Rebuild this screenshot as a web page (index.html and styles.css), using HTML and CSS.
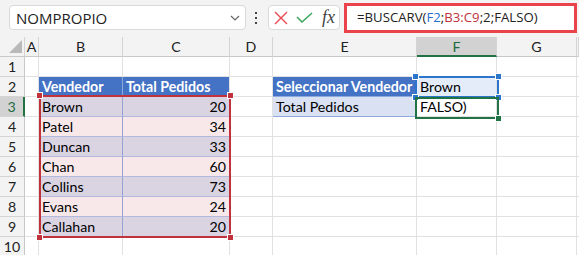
FILE: index.html
```html
<!DOCTYPE html>
<html>
<head>
    <title>BUSCARV - Seleccionar Vendedor</title>
    <link rel="stylesheet" href="styles.css">
</head>
<body>
    <div class="toolbar">
        <div class="name-box">
            <span>NOMPROPIO</span>
            <svg width="10" height="6" viewBox="0 0 10 6"><path d="M1 1 L5 5 L9 1" fill="none" stroke="#666" stroke-width="1.2"/></svg>
        </div>
        <svg class="dots" width="4" height="13" viewBox="0 0 4 13"><rect x="1" y="0" width="2" height="2"/><rect x="1" y="5" width="2" height="2"/><rect x="1" y="10" width="2" height="2"/></svg>
        <div class="fx-box">
            <svg width="14" height="14" viewBox="0 0 14 14"><path d="M1 1 L13 13 M13 1 L1 13" stroke="#e8474f" stroke-width="1.4"/></svg>
            <svg width="17" height="11" viewBox="0 0 17 11"><path d="M1 5 L6 10 L16 1" fill="none" stroke="#3aa65c" stroke-width="1.5"/></svg>
            <span class="fx">fx</span>
        </div>
        <div class="formula">=BUSCARV(<span class="ref-blue">F2</span>;<span class="ref-red">B3:C9</span>;2;FALSO)</div>
    </div>

    <div class="sheet">
        <!-- column headers -->
        <div class="cell corner"><svg width="14" height="14" viewBox="0 0 14 14"><path d="M13 0 L13 13 L0 13 Z" fill="#b9b9b9"/></svg></div>
        <div class="cell col-head">A</div>
        <div class="cell col-head">B</div>
        <div class="cell col-head">C</div>
        <div class="cell col-head">D</div>
        <div class="cell col-head">E</div>
        <div class="cell col-head active">F</div>
        <div class="cell col-head">G</div>
        <div class="cell col-head"></div>

        <!-- row 1 -->
        <div class="cell row-head">1</div>
        <div class="cell"></div><div class="cell"></div><div class="cell"></div><div class="cell"></div>
        <div class="cell"></div><div class="cell"></div><div class="cell"></div><div class="cell"></div>

        <!-- row 2 -->
        <div class="cell row-head">2</div>
        <div class="cell"></div>
        <div class="cell tbl-head sep">Vendedor</div>
        <div class="cell tbl-head">Total Pedidos</div>
        <div class="cell"></div>
        <div class="cell lookup-head">Seleccionar Vendedor</div>
        <div class="cell lookup-input">Brown</div>
        <div class="cell"></div><div class="cell"></div>

        <!-- row 3 -->
        <div class="cell row-head active">3</div>
        <div class="cell"></div>
        <div class="cell band-a sep">Brown</div>
        <div class="cell band-a num">20</div>
        <div class="cell"></div>
        <div class="cell lookup-label">Total Pedidos</div>
        <div class="cell lookup-result">FALSO)</div>
        <div class="cell"></div><div class="cell"></div>

        <!-- row 4 -->
        <div class="cell row-head">4</div>
        <div class="cell"></div>
        <div class="cell band-b sep">Patel</div>
        <div class="cell band-b num">34</div>
        <div class="cell"></div><div class="cell"></div><div class="cell"></div><div class="cell"></div><div class="cell"></div>

        <!-- row 5 -->
        <div class="cell row-head">5</div>
        <div class="cell"></div>
        <div class="cell band-a sep">Duncan</div>
        <div class="cell band-a num">33</div>
        <div class="cell"></div><div class="cell"></div><div class="cell"></div><div class="cell"></div><div class="cell"></div>

        <!-- row 6 -->
        <div class="cell row-head">6</div>
        <div class="cell"></div>
        <div class="cell band-b sep">Chan</div>
        <div class="cell band-b num">60</div>
        <div class="cell"></div><div class="cell"></div><div class="cell"></div><div class="cell"></div><div class="cell"></div>

        <!-- row 7 -->
        <div class="cell row-head">7</div>
        <div class="cell"></div>
        <div class="cell band-a sep">Collins</div>
        <div class="cell band-a num">73</div>
        <div class="cell"></div><div class="cell"></div><div class="cell"></div><div class="cell"></div><div class="cell"></div>

        <!-- row 8 -->
        <div class="cell row-head">8</div>
        <div class="cell"></div>
        <div class="cell band-b sep">Evans</div>
        <div class="cell band-b num">24</div>
        <div class="cell"></div><div class="cell"></div><div class="cell"></div><div class="cell"></div><div class="cell"></div>

        <!-- row 9 -->
        <div class="cell row-head">9</div>
        <div class="cell"></div>
        <div class="cell band-a sep">Callahan</div>
        <div class="cell band-a num">20</div>
        <div class="cell"></div><div class="cell"></div><div class="cell"></div><div class="cell"></div><div class="cell"></div>

        <!-- row 10 -->
        <div class="cell row-head">10</div>
        <div class="cell"></div><div class="cell"></div><div class="cell"></div><div class="cell"></div>
        <div class="cell"></div><div class="cell"></div><div class="cell"></div><div class="cell"></div>

        <!-- selections drawn over the cells -->
        <div class="sel sel-range">
            <i class="handle tl"></i><i class="handle tr"></i><i class="handle bl"></i><i class="handle br"></i>
        </div>
        <div class="sel sel-ref">
            <i class="handle tl"></i><i class="handle tr"></i><i class="handle bl"></i><i class="handle br"></i>
        </div>
        <div class="sel sel-active">
            <i class="handle br"></i>
        </div>
    </div>
</body>
</html>
```

FILE: styles.css
```css
body {
    margin: 0;
    width: 579px;
    height: 255px;
    overflow: hidden;
    background-color: #fff;
    font-family: "Lato", "Liberation Sans", sans-serif;
}

/* formula bar */
.toolbar {
    height: 37px;
    background-color: #f3f3f3;
    display: flex;
    align-items: flex-start;
    padding-left: 9px;
    font-family: "Open Sans", "Noto Sans", sans-serif;
    color: #222;
}

.name-box {
    margin-top: 5px;
    width: 237px;
    height: 25px;
    box-sizing: border-box;
    background-color: #fff;
    border: 1px solid #dadada;
    border-radius: 4px;
    display: flex;
    align-items: center;
    justify-content: space-between;
    padding: 0 5px 0 6px;
    font-size: 15px;
}

.dots {
    margin: 12px 0 0 8px;
    fill: #444;
}

.fx-box {
    margin: 5px 0 0 10px;
    width: 72px;
    height: 25px;
    box-sizing: border-box;
    background-color: #fff;
    border: 1px solid #dadada;
    border-radius: 4px;
    display: flex;
    align-items: center;
    gap: 8px;
    padding-left: 5px;
}

.fx {
    font-family: "Liberation Serif", serif;
    font-style: italic;
    font-size: 18px;
    color: #444;
    margin-left: 1px;
}

.formula {
    margin: 3px 0 0 4px;
    width: 233px;
    height: 30px;
    box-sizing: border-box;
    background-color: #fff;
    border: 3px solid #ea434c;
    padding-left: 10px;
    line-height: 23px;
    font-size: 13.2px;
}

.ref-blue {
    color: #2a6fcb;
}

.ref-red {
    color: #c0323c;
}

/* sheet grid */
.sheet {
    position: relative;
    display: grid;
    grid-template-columns: 25px 14px 84px 107px 43px 144px 80px 80px 2px;
    grid-template-rows: repeat(11, 20px);
    font-size: 14.2px;
    color: #000;
}

.cell {
    box-sizing: border-box;
    border-right: 1px solid #e1e1e1;
    border-bottom: 1px solid #e1e1e1;
    padding: 0 3px;
    line-height: 20px;
    white-space: nowrap;
    overflow: hidden;
}

.corner {
    background-color: #f3f3f3;
    border-right: 1px solid #d4d4d4;
    border-bottom: 1px solid #c8c8c8;
    padding: 3px 0 0 9px;
}

.corner svg {
    display: block;
}

.col-head {
    background-color: #f3f3f3;
    border-right: 1px solid #d4d4d4;
    border-bottom: 1px solid #c8c8c8;
    text-align: center;
    color: #222;
    padding: 0;
}

.col-head.active {
    background-color: #d2d2d2;
    border-bottom: 2px solid #217346;
    color: #1e6b41;
}

.row-head {
    background-color: #f3f3f3;
    border-right: 1px solid #c8c8c8;
    border-bottom: 1px solid #d4d4d4;
    text-align: center;
    color: #222;
    padding: 0;
}

.row-head.active {
    background-color: #d2d2d2;
    border-right: 2px solid #217346;
    color: #1e6b41;
}

/* data table */
.tbl-head {
    background-color: #4472c4;
    color: #fff;
    font-weight: bold;
    border-bottom-color: #4472c4;
}

.tbl-head.sep {
    border-right-color: #8ea9db;
}

.band-a {
    background-color: #d9d3e2;
    border-bottom-color: #b3b9dd;
}

.band-b {
    background-color: #f8e8ea;
    border-bottom-color: #b3b9dd;
}

.sep {
    border-right-color: #97a2d3;
}

.num {
    text-align: right;
}

/* lookup block */
.lookup-head {
    background-color: #4472c4;
    color: #fff;
    font-weight: bold;
    border-right-color: #8ea9db;
    border-bottom-color: #8ea9db;
}

.lookup-input {
    background-color: #e3ecf8;
}

.lookup-label {
    background-color: #d9e1f2;
    border-right-color: #8ea9db;
    border-bottom-color: #8ea9db;
}

/* selection outlines */
.sel {
    position: absolute;
    box-sizing: border-box;
    border: 2px solid;
}

.sel-range {
    left: 39px;
    top: 58px;
    width: 192px;
    height: 143px;
    border-color: #c0323c;
}

.sel-ref {
    left: 415px;
    top: 39px;
    width: 84px;
    height: 22px;
    border-color: #2b75cc;
}

.sel-active {
    left: 415px;
    top: 60px;
    width: 84px;
    height: 22px;
    border-color: #217346;
}

.handle {
    position: absolute;
    width: 5px;
    height: 5px;
    border: 1px solid #fff;
}

.sel-range .handle { background-color: #c0323c; }
.sel-ref .handle { background-color: #2b75cc; }
.sel-active .handle { background-color: #217346; }

.tl { left: -5px; top: -5px; }
.tr { right: -5px; top: -5px; }
.bl { left: -5px; bottom: -5px; }
.br { right: -5px; bottom: -5px; }
```
